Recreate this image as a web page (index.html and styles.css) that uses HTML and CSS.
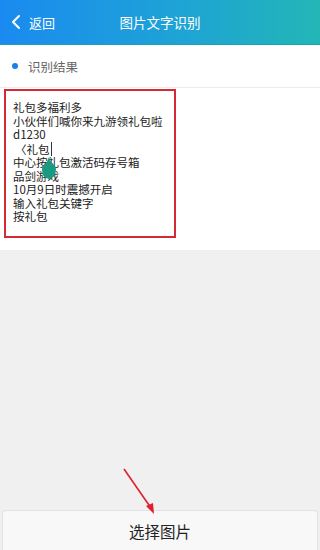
FILE: index.html
```html
<!DOCTYPE html>
<html lang="zh">
<head>
<meta charset="utf-8">
<title>图片文字识别</title>
<link rel="stylesheet" href="styles.css">
</head>
<body>
<div class="app">
  <header class="topbar">
    <div class="back">
      <svg class="chev" width="10" height="16" viewBox="0 0 10 16"><path d="M8 2 L2 8 L8 14" fill="none" stroke="#fff" stroke-width="2" stroke-linecap="round" stroke-linejoin="round"/></svg>
      <span>返回</span>
    </div>
    <div class="title">图片文字识别</div>
  </header>
  <div class="section-head"><span class="dot"></span><span>识别结果</span></div>
  <div class="result-wrap">
    <div class="result-box">
      <div class="line">礼包多福利多</div>
      <div class="line">小伙伴们喊你来九游领礼包啦</div>
      <div class="line">d1230</div>
      <div class="line indent">〈礼包<span class="cursor"></span></div>
      <div class="line">中心按礼包激活码存号箱</div>
      <div class="line">品剑游戏</div>
      <div class="line">10月9日时震撼开启</div>
      <div class="line">输入礼包关键字</div>
      <div class="line">按礼包</div>
      <span class="blob"></span>
    </div>
  </div>
  <div class="spacer"></div>
  <button class="pick">选择图片</button>
  <svg class="arrow" width="320" height="550" viewBox="0 0 320 550">
    <line x1="124" y1="469" x2="151" y2="508" stroke="#e0202a" stroke-width="1.6"/>
    <polygon points="154,514 146,506 153,503" fill="#e0202a"/>
  </svg>
</div>
</body>
</html>
```
FILE: styles.css
```css
* { box-sizing: border-box; }
html, body { margin: 0; padding: 0; }
body {
  width: 320px;
  height: 550px;
  overflow: hidden;
  background: #f0f0f0;
  font-family: "Noto Sans CJK SC", "Noto Sans", sans-serif;
}
.app {
  position: relative;
  height: 550px;
  display: flex;
  flex-direction: column;
}
.topbar {
  height: 45px;
  background: linear-gradient(90deg, #1a8af0 0%, #1ea3d6 55%, #22b6b6 100%);
  border-bottom: 1px solid #1aa0b8;
  display: flex;
  align-items: center;
  position: relative;
  color: #fff;
}
.back {
  display: flex;
  align-items: center;
  gap: 8px;
  padding-left: 11px;
  font-size: 13px;
}
.chev { display: block; }
.title {
  position: absolute;
  left: 0;
  right: 0;
  text-align: center;
  font-size: 13.5px;
  pointer-events: none;
}
.section-head {
  height: 43px;
  background: #fff;
  border-bottom: 1px solid #ececec;
  display: flex;
  align-items: center;
  gap: 10px;
  padding-left: 12px;
  font-size: 12.5px;
  color: #666;
}
.dot {
  width: 6px;
  height: 6px;
  border-radius: 50%;
  background: #1a7fe6;
}
.result-wrap {
  background: #fff;
  padding: 1px 0 12px 4px;
}
.result-box {
  position: relative;
  width: 172px;
  height: 149px;
  border: 2px solid #d42a36;
  padding: 10px 0 0 7px;
  font-size: 11.5px;
  line-height: 13.5px;
  color: #222;
}
.line { white-space: nowrap; }
.indent { padding-left: 2px; }
.cursor {
  display: inline-block;
  width: 1px;
  height: 14px;
  background: #333;
  vertical-align: -2px;
  margin-left: 1px;
}
.blob {
  position: absolute;
  left: 36px;
  top: 72px;
  width: 14px;
  height: 16px;
  background: #1a9a82;
  border-radius: 50% 50% 50% 50% / 40% 40% 60% 60%;
}
.blob::before {
  content: "";
  position: absolute;
  left: 3px;
  top: -6px;
  width: 0;
  height: 0;
  border-left: 4px solid transparent;
  border-right: 4px solid transparent;
  border-bottom: 9px solid #1a9a82;
}
.spacer { flex: 1; }
.pick {
  margin: 0 2px;
  height: 40px;
  background: #f8f8f8;
  border: 1px solid #e2e2e2;
  border-bottom: none;
  border-radius: 4px 4px 0 0;
  font-family: "Noto Sans CJK SC", "Noto Sans", sans-serif;
  font-size: 15.5px;
  color: #222;
  padding: 0;
}
.arrow {
  position: absolute;
  left: 0;
  top: 0;
  pointer-events: none;
}
```
